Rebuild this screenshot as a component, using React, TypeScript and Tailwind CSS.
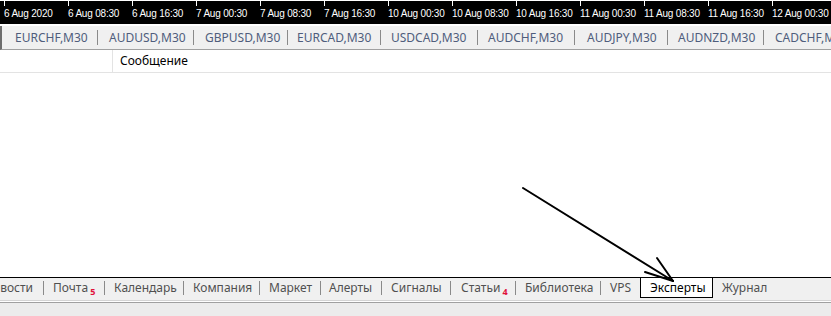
import React from "react";

const times = [
  "6 Aug 2020",
  "6 Aug 08:30",
  "6 Aug 16:30",
  "7 Aug 00:30",
  "7 Aug 08:30",
  "7 Aug 16:30",
  "10 Aug 00:30",
  "10 Aug 08:30",
  "10 Aug 16:30",
  "11 Aug 00:30",
  "11 Aug 08:30",
  "11 Aug 16:30",
  "12 Aug 00:30",
];

const topTabs = [
  { label: "EURCHF,M30", w: "w-[82px]", gap: "mr-[11px]" },
  { label: "AUDUSD,M30", w: "w-[84px]", gap: "mr-[11px]" },
  { label: "GBPUSD,M30", w: "w-[82px]", gap: "mr-[9px]" },
  { label: "EURCAD,M30", w: "w-[83px]", gap: "mr-[10px]" },
  { label: "USDCAD,M30", w: "w-[86px]", gap: "mr-[10px]" },
  { label: "AUDCHF,M30", w: "w-[86px]", gap: "mr-[12px]" },
  { label: "AUDJPY,M30", w: "w-[80px]", gap: "mr-[10px]" },
  { label: "AUDNZD,M30", w: "w-[85px]", gap: "mr-[11px]" },
];

const bottomTabs = [
  { label: "Почта", w: "w-[51px]", gap: "mr-[9px]", badge: "5" },
  { label: "Календарь", w: "w-[69px]", gap: "mr-[9px]" },
  { label: "Компания", w: "w-[66px]", gap: "mr-[9px]" },
  { label: "Маркет", w: "w-[51px]", gap: "mr-[8px]" },
  { label: "Алерты", w: "w-[52px]", gap: "mr-[9px]" },
  { label: "Сигналы", w: "w-[59px]", gap: "mr-[10px]" },
  { label: "Статьи", w: "w-[54px]", gap: "mr-[9px]", badge: "4" },
  { label: "Библиотека", w: "w-[75px]", gap: "mr-[9px]" },
];

const ui = { fontFamily: '"Noto Sans", "Open Sans", Arial, sans-serif' };
const axis = { fontFamily: '"Liberation Sans", Arial, sans-serif' };

function TopSep() {
  return <div className="w-px h-[15px] bg-[#8a8a8a] shrink-0" />;
}

function BottomSep() {
  return <div className="w-px h-[14px] bg-[#8a8a8a] shrink-0" />;
}

export default function App() {
  return (
    <div className="relative w-[831px] h-[316px] overflow-hidden bg-white flex flex-col">
      {/* Time axis */}
      <div className="h-[24px] bg-black border-t border-white flex pl-[4px] shrink-0" style={axis}>
        {times.map((t) => (
          <div key={t} className="relative w-[64px] shrink-0 h-full">
            <div className="absolute left-0 top-0 w-px h-[5px] bg-white" />
            <div className="absolute left-0 top-[6px] text-white text-[10px] leading-[14px] whitespace-nowrap tracking-[-0.2px]">
              {t}
            </div>
          </div>
        ))}
      </div>
      <div className="h-[2px] bg-white shrink-0" />

      {/* Chart tabs */}
      <div
        className="h-[24px] bg-[#f0f0f0] border-l-2 border-[#6d6d6d] border-b border-b-[#a0a0a0] flex items-center pl-[13px] shrink-0 overflow-hidden"
        style={ui}
      >
        {topTabs.map((t) => (
          <React.Fragment key={t.label}>
            <div className={`${t.w} shrink-0 text-[12px] text-[#4f5d7c] whitespace-nowrap`}>{t.label}</div>
            <TopSep />
            <div className={`${t.gap} shrink-0`} />
          </React.Fragment>
        ))}
        <div className="shrink-0 text-[12px] text-[#4f5d7c] whitespace-nowrap">CADCHF,M30</div>
      </div>

      {/* Header row */}
      <div className="h-[23px] bg-white border-b border-[#e3e3e3] flex shrink-0" style={ui}>
        <div className="w-[113px] border-r border-[#e3e3e3] shrink-0" />
        <div className="pl-[7px] text-[12px] text-black leading-[22px]">Сообщение</div>
      </div>

      {/* Content */}
      <div className="flex-1 bg-white" />

      {/* Bottom tabs */}
      <div className="h-[23px] bg-[#f0f0f0] border-t border-black flex items-start shrink-0" style={ui}>
        <div className="h-[20px] flex items-center">
          <div className="w-[43px] overflow-hidden flex justify-end pr-[10px] shrink-0">
            <span className="text-[12px] text-[#505050] whitespace-nowrap">Новости</span>
          </div>
          <BottomSep />
          <div className="mr-[9px] shrink-0" />
          {bottomTabs.map((t) => (
            <React.Fragment key={t.label}>
              <div className={`${t.w} shrink-0 flex items-baseline whitespace-nowrap`}>
                <span className="text-[12px] text-[#505050]">{t.label}</span>
                {t.badge && (
                  <span className="ml-[2px] text-[9px] font-bold text-[#e0103a] relative top-[3px]">{t.badge}</span>
                )}
              </div>
              <BottomSep />
              <div className={`${t.gap} shrink-0`} />
            </React.Fragment>
          ))}
          <div className="w-[30px] shrink-0 text-[12px] text-[#505050]">VPS</div>
        </div>
        <div className="w-[73px] h-[20px] bg-white border-x border-b border-black flex items-center pl-[9px] shrink-0">
          <span className="text-[12px] text-black whitespace-nowrap">Эксперты</span>
        </div>
        <div className="h-[20px] flex items-center pl-[9px]">
          <span className="text-[12px] text-[#505050] whitespace-nowrap">Журнал</span>
        </div>
      </div>
      <div className="h-[16px] bg-[#f0f0f0] flex flex-col shrink-0">
        <div className="h-px bg-[#d4d4d4]" />
        <div className="h-px bg-white" />
        <div className="h-px bg-[#a0a0a0]" />
        <div className="flex-1 bg-[#ececec]" />
      </div>

      {/* Arrow annotation */}
      <svg className="absolute inset-0 pointer-events-none" width="831" height="316" viewBox="0 0 831 316">
        <g stroke="#000" strokeWidth="2" strokeLinecap="round" fill="none">
          <line x1="523" y1="188" x2="673" y2="281" />
          <line x1="673" y1="281" x2="657" y2="258" />
          <line x1="673" y1="281" x2="645" y2="272" />
        </g>
      </svg>
    </div>
  );
}
